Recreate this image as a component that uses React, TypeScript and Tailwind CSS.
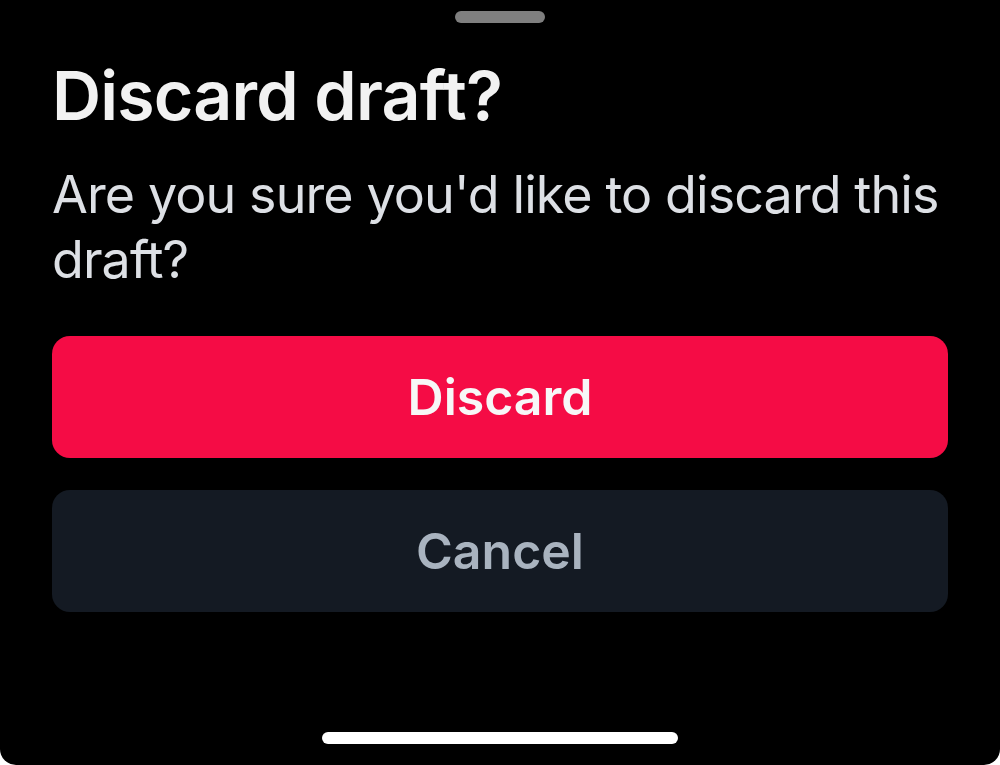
export default function App() {
  return (
    <div className="w-[1000px] h-[765px] bg-white" style={{ fontFamily: "Inter, 'Noto Sans', sans-serif" }}>
      <div className="relative w-full h-full bg-black rounded-b-[16px] overflow-hidden flex flex-col px-[52px]">
        <div className="flex justify-center pt-[11px]">
          <div className="w-[90px] h-[12px] rounded-full bg-[#7f7f7f]" />
        </div>
        <h1 className="mt-[31px] text-[68px] leading-[82px] font-semibold text-[#f2f2f2] tracking-[-0.8px]">
          Discard draft?
        </h1>
        <p className="mt-[26px] text-[52px] leading-[65px] text-[#dde0e5] tracking-[-0.9px]">
          Are you sure you'd like to discard this draft?
        </p>
        <button className="mt-[44px] h-[122px] w-full rounded-[18px] bg-[#f50c45] text-[50px] font-semibold text-[#f7f7f7]">
          Discard
        </button>
        <button className="mt-[32px] h-[122px] w-full rounded-[18px] bg-[#141a23] text-[50px] font-semibold text-[#a9b3bf]">
          Cancel
        </button>
        <div className="absolute left-[322px] top-[732px] w-[356px] h-[12px] rounded-full bg-white" />
      </div>
    </div>
  );
}
